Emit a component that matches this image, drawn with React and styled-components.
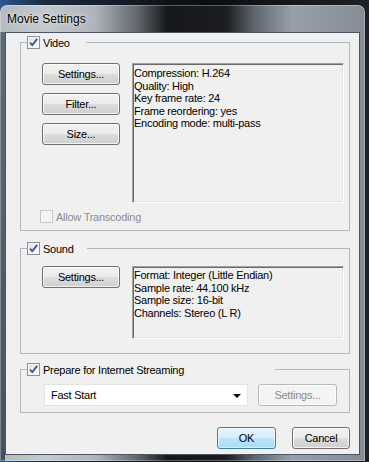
import styled, { createGlobalStyle } from "styled-components"

const GlobalStyle = createGlobalStyle`
  html, body {
    margin: 0;
    padding: 0;
  }
  body {
    width: 369px;
    height: 462px;
    overflow: hidden;
    background: #12171e;
    font-family: "Liberation Sans", Arial, sans-serif;
  }
`

const Desktop = styled.div`
  width: 369px;
  height: 462px;
  box-sizing: border-box;
  padding-top: 5px;
  background: linear-gradient(90deg, #2c568e 0%, #1b2a3e 12%, #0b0d10 55%, #1d2126 100%);
`

const Window = styled.div`
  width: 365px;
  height: 456px;
  box-sizing: border-box;
  padding: 0 5px 6px;
  display: flex;
  flex-direction: column;
  border-radius: 7px 7px 0 0;
  background:
    linear-gradient(180deg, #5d6b78, #44505c) 0 27px / 5px 100% no-repeat,
    linear-gradient(90deg, #b3bac1 0%, #c3c9ce 12%, #aeb5bb 26%, #5e646a 38%, #15171a 46%, #1b1d20 62%, #5f6870 70%, #97a0a8 80%, #8c959d 92%, #848d95 100%);
  box-shadow: inset 0 0 0 1px rgba(255, 255, 255, 0.3);
`

const TitleBar = styled.div`
  height: 27px;
  display: flex;
  align-items: center;
  padding-left: 2px;
  font-size: 12px;
  color: #000;
  text-shadow: 0 0 6px rgba(255, 255, 255, 0.8), 0 0 2px rgba(255, 255, 255, 0.6);
`

const Client = styled.div`
  flex: 1;
  display: flex;
  flex-direction: column;
  padding: 3px 9px 5px 14px;
  background: #f0f0f0;
  border: 1px solid #4a5661;
  font-size: 11px;
  letter-spacing: -0.25px;
  color: #000;
`

const Group = styled.fieldset`
  margin: ${p => p.$top}px 0 0;
  padding: 0;
  min-width: 0;
  border: 1px solid #b4b8bc;
`

const Legend = styled.legend`
  width: ${p => p.$w}px;
  height: 13px;
  margin-left: 6px;
  padding: 0;
  display: flex;
  align-items: center;
  gap: 3px;
`

const GroupBody = styled.div`
  padding: ${p => p.$pad};
  display: flex;
  flex-direction: column;
`

const Row = styled.div`
  display: flex;
  align-items: flex-start;
  gap: ${p => p.$gap ?? 12}px;
`

const ButtonColumn = styled.div`
  display: flex;
  flex-direction: column;
  gap: 8px;
`

const Button = styled.button`
  width: ${p => p.$w}px;
  height: 22px;
  padding: 0;
  box-sizing: border-box;
  font-family: "Liberation Sans", Arial, sans-serif;
  font-size: 11px;
  letter-spacing: -0.25px;
  color: ${p => (p.disabled ? "#8a8a8a" : "#000")};
  border: 1px solid ${p => (p.$primary ? "#3c7fb1" : p.disabled ? "#b5b9bc" : "#707070")};
  border-radius: 3px;
  background: ${p =>
    p.$primary
      ? "linear-gradient(180deg, #e5f4fc 0%, #d4eefb 50%, #bde5fc 50%, #a9dbf6 100%)"
      : p.disabled
      ? "#f4f4f4"
      : "linear-gradient(180deg, #f2f2f2 0%, #ebebeb 50%, #dddddd 50%, #cfcfcf 100%)"};
  box-shadow: inset 0 0 0 1px ${p => (p.$primary ? "rgba(255,255,255,0.55)" : "rgba(255,255,255,0.75)")};
`

const InfoBox = styled.div`
  flex: 1;
  height: ${p => p.$h}px;
  box-sizing: border-box;
  padding: ${p => p.$padTop}px 1px 0;
  background: #f0f0f0;
  border: 1px solid;
  border-color: #a0a0a0 #ffffff #ffffff #a0a0a0;
  box-shadow: inset 1px 1px 0 #6a6a6a, inset -1px -1px 0 #e3e3e3;
  line-height: 12.5px;
  white-space: nowrap;
`

const CheckRow = styled.label`
  display: flex;
  align-items: center;
  gap: 3px;
  margin-left: -2px;
  height: 13px;
  color: ${p => (p.$disabled ? "#8d8d8d" : "#000")};
`

const Box = styled.span`
  flex: none;
  width: 13px;
  height: 13px;
  box-sizing: border-box;
  display: flex;
  align-items: center;
  justify-content: center;
  border: 1px solid ${p => (p.$disabled ? "#c6c6c6" : "#8e8f8f")};
  background: ${p =>
    p.$disabled ? "#f4f4f4" : "linear-gradient(135deg, #d8dbdf 0%, #f3f4f5 60%, #ffffff 100%)"};
  box-shadow: inset 0 0 0 1px ${p => (p.$disabled ? "#f7f7f7" : "#f6f6f6")};
`

const Select = styled.div`
  width: 204px;
  height: 22px;
  box-sizing: border-box;
  display: flex;
  align-items: center;
  justify-content: space-between;
  padding: 0 6px 0 6px;
  background: #fff;
  border: 1px solid #e2e3e4;
`

const Arrow = styled.span`
  width: 0;
  height: 0;
  border-left: 4px solid transparent;
  border-right: 4px solid transparent;
  border-top: 4px solid #000;
  margin-top: 1px;
`

const Footer = styled.div`
  margin-top: 14px;
  display: flex;
  justify-content: flex-end;
  gap: 16px;
`

const Checkbox = ({ checked, disabled }) => (
  <Box $disabled={disabled}>
    {checked && (
      <svg width="11" height="11" viewBox="0 0 11 11">
        <path d="M2 5.6 L4.3 8.1 L9.2 1.8" fill="none" stroke="#41559a" strokeWidth="1.9" />
      </svg>
    )}
  </Box>
)

const GroupTitle = ({ w, children }) => (
  <Legend $w={w}>
    <Checkbox checked />
    <span>{children}</span>
  </Legend>
)

const App = () => {
  return (
    <Desktop>
      <GlobalStyle />
      <Window>
        <TitleBar>Movie Settings</TitleBar>
        <Client>
          <Group $top={0}>
            <GroupTitle w={59}>Video</GroupTitle>
            <GroupBody $pad="14px 5px 7px 21px">
              <Row>
                <ButtonColumn>
                  <Button $w={78}>Settings...</Button>
                  <Button $w={78}>Filter...</Button>
                  <Button $w={78}>Size...</Button>
                </ButtonColumn>
                <InfoBox $h={140} $padTop={3}>
                  Compression: H.264
                  <br />
                  Quality: High
                  <br />
                  Key frame rate: 24
                  <br />
                  Frame reordering: yes
                  <br />
                  Encoding mode: multi-pass
                </InfoBox>
              </Row>
              <CheckRow $disabled style={{ marginTop: 7 }}>
                <Checkbox disabled />
                <span>Allow Transcoding</span>
              </CheckRow>
            </GroupBody>
          </Group>

          <Group $top={11}>
            <GroupTitle w={60}>Sound</GroupTitle>
            <GroupBody $pad="11px 5px 14px 21px">
              <Row>
                <Button $w={78}>Settings...</Button>
                <InfoBox $h={73} $padTop={2}>
                  Format: Integer (Little Endian)
                  <br />
                  Sample rate: 44.100 kHz
                  <br />
                  Sample size: 16-bit
                  <br />
                  Channels: Stereo (L R)
                </InfoBox>
              </Row>
            </GroupBody>
          </Group>

          <Group $top={9}>
            <GroupTitle w={248}>Prepare for Internet Streaming</GroupTitle>
            <GroupBody $pad="8px 5px 6px 23px">
              <Row $gap={10}>
                <Select>
                  <span>Fast Start</span>
                  <Arrow />
                </Select>
                <Button $w={79} disabled>
                  Settings...
                </Button>
              </Row>
            </GroupBody>
          </Group>

          <Footer>
            <Button $w={59} $primary>
              OK
            </Button>
            <Button $w={58}>Cancel</Button>
          </Footer>
        </Client>
      </Window>
    </Desktop>
  )
}

export default App
